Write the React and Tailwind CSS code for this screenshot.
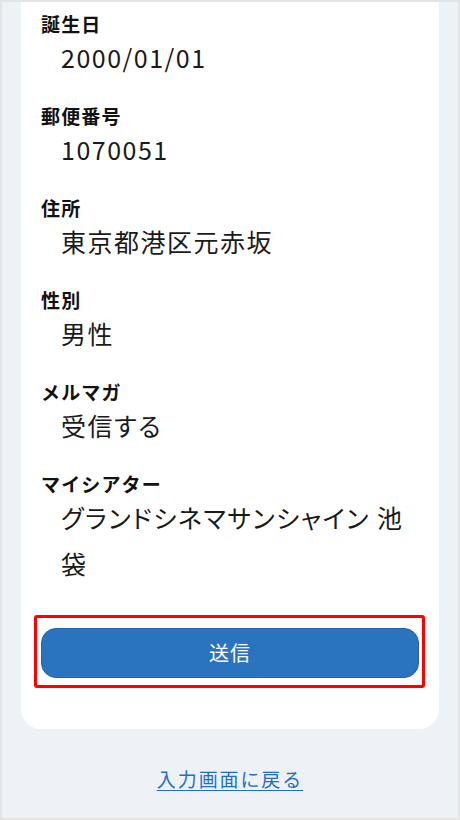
export default function App() {
  const items = [
    { label: "誕生日", value: "2000/01/01" },
    { label: "郵便番号", value: "1070051" },
    { label: "住所", value: "東京都港区元赤坂" },
    { label: "性別", value: "男性" },
    { label: "メルマガ", value: "受信する" },
    { label: "マイシアター", value: "グランドシネマサンシャイン 池袋" },
  ];
  return (
    <div className="w-[460px] h-[820px] box-border border-2 border-[#e4e4e4] bg-[#eef1f5] flex flex-col overflow-hidden font-['Noto_Sans_CJK_JP','Noto_Sans',sans-serif] text-[#1a1a1a]">
      <div className="mx-[19px] bg-white rounded-b-[20px] px-5 pt-[11.5px] pb-[51px]">
        <div className="flex flex-col gap-[26px]">
          {items.map((it) => (
            <div key={it.label} className="flex flex-col">
              <div className="text-[19px] font-bold leading-[20px] tracking-[0.06em] text-[#111]">{it.label}</div>
              <div className="text-[25px] leading-[46px] tracking-[0.06em] pl-5 [font-feature-settings:'palt']">{it.value}</div>
            </div>
          ))}
        </div>
        <div className="relative mt-[42.5px]">
          <button className="w-full h-[50px] rounded-[15px] bg-[#2a73bf] border border-[#2164ad] text-white text-[20px] tracking-[0.05em] flex items-center justify-center">
            送信
          </button>
          <div className="absolute -left-[7px] -top-[13px] -right-[6px] -bottom-[10px] border-[3px] border-[#ff0000] rounded-[3px] pointer-events-none" />
        </div>
      </div>
      <div className="mt-[38px] flex justify-center">
        <a href="#" className="text-[19px] leading-[24px] tracking-[0.1em] text-[#1f6fc5] underline underline-offset-[3px]">
          入力画面に戻る
        </a>
      </div>
    </div>
  );
}
